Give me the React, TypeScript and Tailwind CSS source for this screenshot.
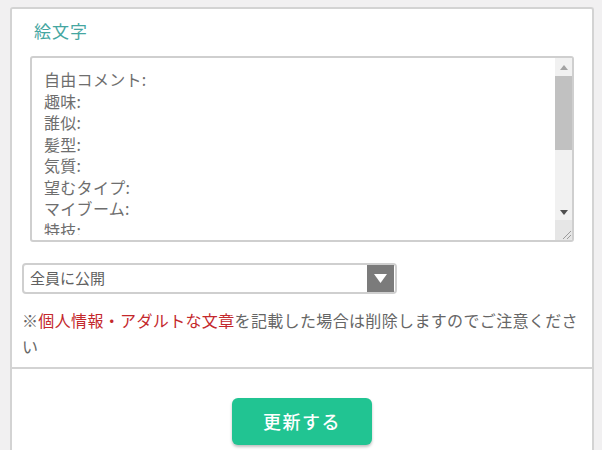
import React from "react";

const lines = [
  "自由コメント:",
  "趣味:",
  "誰似:",
  "髪型:",
  "気質:",
  "望むタイプ:",
  "マイブーム:",
  "特技:",
];

export default function App() {
  return (
    <div
      className="min-h-[450px] bg-[#f1f0f1] pt-[7px] pl-[10px] overflow-hidden"
      style={{ fontFamily: '"Noto Sans CJK JP", "Noto Sans", sans-serif' }}
    >
      <div className="w-[584px] h-[460px] border-2 border-b-0 border-[#d3d3d3] rounded-t-[3px] bg-white">
        <div className="px-[10px] pt-[12px] pb-[8px]">
          <div className="ml-[12px] text-[17px] leading-[20px] tracking-[1px] text-[#45a6a1]">絵文字</div>
          <div className="mt-[15px] ml-[8px] w-[544px] h-[186px] border-2 border-[#cfcfcf] rounded-[3px] flex overflow-hidden">
            <div className="flex-1">
              <div className="h-[177px] pl-[12px] pt-[11px] text-[16px] leading-[21.5px] tracking-[0.3px] text-[#6e6e6e] overflow-hidden">
                {lines.map((l) => (
                  <div key={l} className="whitespace-nowrap">{l}</div>
                ))}
              </div>
            </div>
            <div className="w-[17px] flex flex-col bg-[#f1f1f1]">
              <div className="h-[18px] flex items-center justify-center">
                <svg width="8" height="5" viewBox="0 0 8 5">
                  <polygon points="4,0 8,5 0,5" fill="#a3a3a3" />
                </svg>
              </div>
              <div className="h-[74px] bg-[#c1c1c1]" />
              <div className="flex-1" />
              <div className="h-[16px] flex items-center justify-center">
                <svg width="8" height="5" viewBox="0 0 8 5">
                  <polygon points="0,0 8,0 4,5" fill="#505050" />
                </svg>
              </div>
              <div className="h-[20px] bg-[#e6e6e6] flex items-end justify-end">
                <svg width="12" height="12" viewBox="0 0 12 12">
                  <line x1="11" y1="3" x2="3" y2="11" stroke="#9a9a9a" strokeWidth="1" />
                  <line x1="11" y1="7" x2="7" y2="11" stroke="#9a9a9a" strokeWidth="1" />
                </svg>
              </div>
            </div>
          </div>
          <div className="mt-[21px] w-[375px] h-[31px] border-2 border-[#cfcfcf] rounded-[4px] flex items-center justify-between">
            <span className="pl-[6px] text-[15px] text-[#606060]">全員に公開</span>
            <div className="w-[27px] h-[27px] mr-[1px] bg-[#7b7b7b] flex items-center justify-center">
              <svg width="13" height="9" viewBox="0 0 13 9">
                <polygon points="0,0 13,0 6.5,9" fill="#ffffff" />
              </svg>
            </div>
          </div>
          <p className="mt-[13px] w-[560px] text-[16px] leading-[26px] tracking-[0.35px] text-[#666]">
            ※<span className="text-[#c4282c]">個人情報・アダルトな文章</span>を記載した場合は削除しますのでご注意ください
          </p>
        </div>
        <div className="border-t-2 border-[#d3d3d3] pt-[29px]">
          <button className="mx-auto block w-[140px] h-[47px] rounded-[6px] bg-[#21c492] shadow-[0_2px_3px_rgba(0,0,0,0.25)] text-white text-[18px] font-medium tracking-[1.5px]">
            更新する
          </button>
        </div>
      </div>
    </div>
  );
}
